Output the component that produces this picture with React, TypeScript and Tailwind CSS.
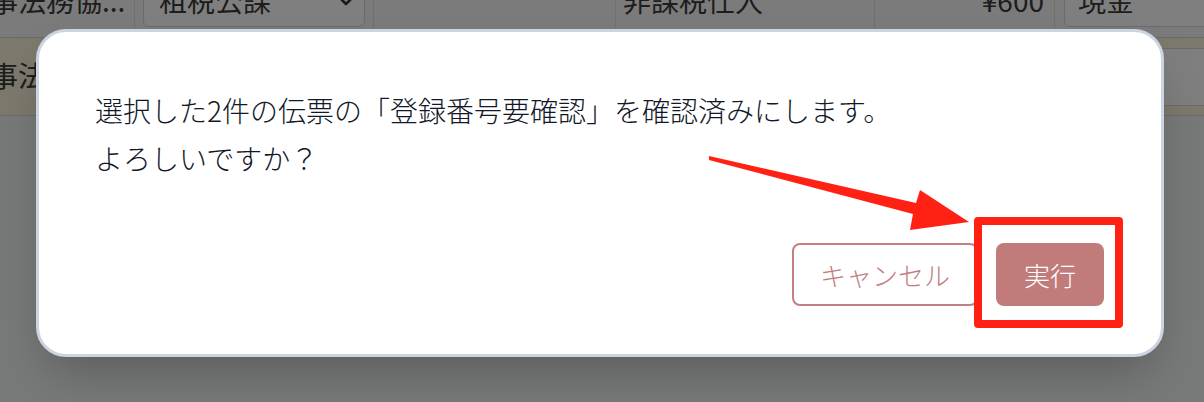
export default function App() {
  return (
    <div className="relative h-[402px] w-[1204px] overflow-hidden bg-[#f1f2f3] font-['Noto_Sans_CJK_JP','Noto_Sans',sans-serif]">
      {/* background table */}
      <div className="flex flex-col text-[28px] leading-[28px] text-[#3a3a3a]">
        <div className="-mt-[20px] flex h-[58px] border-b border-[#d4d4d8] bg-[#f7f7f7]">
          <div className="flex w-[135px] shrink-0 items-end border-r border-[#e0e0e3] pb-[23px]">
            <span className="-ml-[10px] whitespace-nowrap">事法務協...</span>
          </div>
          <div className="flex w-[239px] shrink-0 items-end border-r border-[#e0e0e3] px-[8px] pb-[10px]">
            <div className="flex h-[47px] w-full items-end justify-between rounded-[6px] border border-[#d6d6da] bg-white pb-[12px] pl-[15px] pr-[10px]">
              <span className="whitespace-nowrap">租税公課</span>
              <svg width="16" height="16" viewBox="0 0 16 16" className="mb-[5px]">
                <path d="M3 6 L8 11 L13 6" fill="none" stroke="#333" strokeWidth="2.6" strokeLinecap="round" strokeLinejoin="round" />
              </svg>
            </div>
          </div>
          <div className="w-[242px] shrink-0 border-r border-[#e0e0e3]" />
          <div className="flex w-[259px] shrink-0 items-end border-r border-[#e0e0e3] pb-[23px] pl-[7px]">
            <span className="whitespace-nowrap">非課税仕入</span>
          </div>
          <div className="flex w-[180px] shrink-0 items-end justify-end border-r border-[#e0e0e3] pb-[23px] pr-[10px]">
            <span className="whitespace-nowrap">¥600</span>
          </div>
          <div className="flex flex-1 items-end pb-[10px] pl-[9px]">
            <div className="flex h-[47px] w-[300px] items-end rounded-[6px] border border-[#d6d6da] bg-white pb-[12px] pl-[13px]">
              <span className="whitespace-nowrap">現金</span>
            </div>
          </div>
        </div>
        <div className="flex h-[78px] border-b border-[#d4d4d8] bg-[#fcf3da]">
          <div className="flex w-[135px] shrink-0 items-center border-r border-[#e8dfc6] pb-[4px]">
            <span className="-ml-[10px] whitespace-nowrap">事法務協...</span>
          </div>
          <div className="flex w-[239px] shrink-0 border-r border-[#e8dfc6] px-[8px] pb-[9px] pt-[10px]">
            <div className="w-full rounded-[6px] border border-[#d6d6da] bg-white" />
          </div>
          <div className="w-[242px] shrink-0 border-r border-[#e8dfc6]" />
          <div className="flex w-[259px] shrink-0 border-r border-[#e8dfc6] px-[8px] pb-[9px] pt-[10px]">
            <div className="w-full rounded-[6px] border border-[#d6d6da] bg-white" />
          </div>
          <div className="flex w-[180px] shrink-0 border-r border-[#e8dfc6] px-[8px] pb-[9px] pt-[10px]">
            <div className="w-full rounded-[6px] border border-[#d6d6da] bg-white" />
          </div>
          <div className="flex flex-1 pb-[9px] pl-[9px] pt-[10px]">
            <div className="w-[300px] rounded-[6px] border border-[#d6d6da] bg-white" />
          </div>
        </div>
      </div>

      {/* overlay + dialog */}
      <div className="absolute inset-0 bg-black/50">
        <div className="pl-[36px] pt-[29px]">
          <div className="relative flex h-[328px] w-[1128px] flex-col rounded-[30px] border-[3px] border-[#cbd5e1] bg-white pb-[48px] pl-[56px] pr-[57px] pt-[54px] shadow-2xl">
            <p className="whitespace-nowrap text-[28px] font-light leading-[48px] text-[#111827]">
              選択した2件の伝票の「登録番号要確認」を確認済みにします。
              <br />
              よろしいですか？
            </p>
            <div className="mt-[61px] flex justify-end gap-[18px]">
              <button className="flex h-[63px] items-center rounded-[8px] border-2 border-[#c38181] bg-white px-[26px] text-[26px] font-light text-[#c07f7f]">
                キャンセル
              </button>
              <button className="flex h-[63px] items-center rounded-[8px] bg-[#c17b7b] px-[28px] text-[26px] font-light text-white">
                実行
              </button>
            </div>
            <div className="pointer-events-none absolute left-[935px] top-[185px] h-[111px] w-[149px] rounded-[4px] border-[8px] border-[#ff2113]" />
          </div>
        </div>
        <svg className="pointer-events-none absolute left-0 top-0" width="1204" height="402" viewBox="0 0 1204 402">
          <polygon
            points="709,156 916,203 920,190 969,222 910,230 913,214 709,160"
            fill="#ff2113"
            strokeLinejoin="round"
          />
        </svg>
      </div>
    </div>
  );
}
